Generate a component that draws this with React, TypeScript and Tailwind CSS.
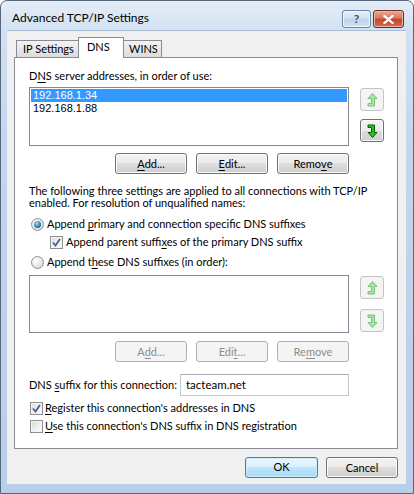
import React from "react";

const F = { fontFamily: "Lato, 'Noto Sans', sans-serif" };

function U({ children }: { children: React.ReactNode }) {
  return <span className="underline underline-offset-[2px] decoration-[1px]">{children}</span>;
}

function UpIcon({ enabled }: { enabled: boolean }) {
  return (
    <svg width="14" height="16" viewBox="0 0 14 16">
      <path
        d="M7.5 1.5 L12 6.5 L9.5 6.5 L9.5 14 L3 14 L3 11.5 L6.5 11.5 L6.5 6.5 L3 6.5 Z"
        fill={enabled ? "#22c322" : "#a6e3a6"}
        stroke={enabled ? "#0b5d0b" : "#73c673"}
        strokeWidth="1"
        strokeLinejoin="round"
      />
    </svg>
  );
}

function DownIcon({ enabled }: { enabled: boolean }) {
  return (
    <svg width="14" height="16" viewBox="0 0 14 16">
      <path
        d="M7.5 14.5 L12 9.5 L9.5 9.5 L9.5 2 L3 2 L3 4.5 L6.5 4.5 L6.5 9.5 L3 9.5 Z"
        fill={enabled ? "#22c322" : "#a6e3a6"}
        stroke={enabled ? "#0b5d0b" : "#73c673"}
        strokeWidth="1"
        strokeLinejoin="round"
      />
    </svg>
  );
}

function ArrowBtn({ dir, enabled }: { dir: "up" | "down"; enabled: boolean }) {
  return (
    <div
      className={
        "w-[24px] h-[23px] rounded-[3px] flex items-center justify-center border " +
        (enabled
          ? "border-[#707070] bg-[linear-gradient(180deg,#f2f2f2_0%,#ebebeb_50%,#dddddd_50%,#cfcfcf_100%)] shadow-[inset_0_0_0_1px_#fafafa]"
          : "border-[#c2c6c9] bg-[#f4f4f4]")
      }
    >
      {dir === "up" ? <UpIcon enabled={enabled} /> : <DownIcon enabled={enabled} />}
    </div>
  );
}

function Btn({ children, disabled, w = 72 }: { children: React.ReactNode; disabled?: boolean; w?: number }) {
  return (
    <div
      style={{ width: w }}
      className={
        "h-[21px] rounded-[3px] border flex items-center justify-center text-[11px] leading-[14px] " +
        (disabled
          ? "border-[#adb2b5] bg-[#f4f4f4] text-[#8d8d8d]"
          : "border-[#707070] text-black bg-[linear-gradient(180deg,#f2f2f2_0%,#ebebeb_50%,#dddddd_50%,#cfcfcf_100%)] shadow-[inset_0_0_0_1px_#fcfcfc]")
      }
    >
      {children}
    </div>
  );
}

function Radio({ checked }: { checked: boolean }) {
  return (
    <div className="w-[13px] h-[13px] rounded-full border border-[#8e8f8f] bg-[radial-gradient(circle_at_35%_35%,#ffffff_0%,#e4e4e4_60%,#cfcfcf_100%)] flex items-center justify-center shrink-0">
      {checked && (
        <div className="w-[7px] h-[7px] rounded-full bg-[radial-gradient(circle_at_40%_35%,#a9e1f9_0%,#2e7fb9_55%,#0c3c6b_100%)]" />
      )}
    </div>
  );
}

function Check({ checked }: { checked: boolean }) {
  return (
    <div className="w-[13px] h-[13px] border border-[#8e8f8f] bg-[linear-gradient(135deg,#dcdcdc_0%,#f5f5f5_70%,#ffffff_100%)] shadow-[inset_0_0_0_1px_#f4f4f4] flex items-center justify-center shrink-0">
      {checked && (
        <svg width="9" height="9" viewBox="0 0 9 9">
          <path d="M1 4.5 L3.5 7.5 L8 1" fill="none" stroke="#4a5f97" strokeWidth="1.8" />
        </svg>
      )}
    </div>
  );
}

export default function App() {
  return (
    <div
      style={F}
      className="w-[414px] h-[494px] relative rounded-t-[7px] border border-[#55687e] bg-[linear-gradient(180deg,#e4edf7_0%,#d2e1f1_6%,#c2d6ec_30%,#b9cfe9_100%)] text-black overflow-hidden"
    >
      {/* title bar */}
      <div className="h-[29px] flex items-start">
        <div className="pl-[11px] pt-[10px] text-[12px] leading-[14px] text-black flex-1">
          Advanced TCP/IP Settings
        </div>
        <div className="flex pt-[9px] pr-[9px] gap-[2px]">
          <div className="w-[29px] h-[18px] rounded-[3px] border border-[#6d84a4] bg-[linear-gradient(180deg,#e8f0f9_0%,#d3e1f1_45%,#bfd2ea_50%,#cfe0f3_100%)] shadow-[inset_0_0_0_1px_#f2f7fc] flex items-center justify-center text-[12px] font-bold text-[#3b4f6e]">
            ?
          </div>
          <div className="w-[31px] h-[18px] rounded-[3px] border border-[#6b2b21] bg-[linear-gradient(180deg,#e9a996_0%,#d9785f_45%,#c4442a_50%,#d56d52_100%)] shadow-[inset_0_0_0_1px_#eab7a8] flex items-center justify-center">
            <svg width="11" height="9" viewBox="0 0 11 9">
              <path d="M1.5 1 L9.5 8 M9.5 1 L1.5 8" stroke="#ffffff" strokeWidth="2.2" strokeLinecap="square" />
            </svg>
          </div>
        </div>
      </div>

      {/* client */}
      <div className="ml-[6px] w-[399px] h-[454px] bg-[#f0f0f0] border-t border-[#a8bcd4] flex flex-col">
        {/* tabs */}
        <div className="h-[20px] mt-[6px] flex items-end pl-[9px] text-[11px] leading-[14px]">
          <div className="w-[63px] h-[17px] border border-b-0 border-[#898c95] bg-[linear-gradient(180deg,#f2f2f2_0%,#e8e8e8_50%,#dcdcdc_100%)] pl-[6px] pt-[1px]">
            IP Settings
          </div>
          <div className="relative z-10 w-[46px] h-[21px] -mb-[1px] -ml-[1px] border border-b-0 border-[#898c95] bg-white pl-[8px] pt-[2px]">
            DNS
          </div>
          <div className="w-[39px] h-[17px] -ml-[1px] border border-b-0 border-[#898c95] bg-[linear-gradient(180deg,#f2f2f2_0%,#e8e8e8_50%,#dcdcdc_100%)] pl-[5px] pt-[1px]">
            WINS
          </div>
        </div>

        {/* panel */}
        <div className="ml-[7px] w-[384px] h-[392px] border border-[#898c95] bg-white pl-[14px] flex flex-col text-[11px] leading-[14px]">
          <div className="mt-[11px]">
            D<U>N</U>S server addresses, in order of use:
          </div>
          <div className="mt-[4px] flex">
            <div
              className="w-[320px] h-[59px] border border-[#828790] bg-white p-[1px] text-[11px] leading-[13px]"
              style={{ fontFamily: "'Liberation Sans', Arial, sans-serif" }}
            >
              <div className="h-[13px] bg-[#3399ff] text-white pl-[2px]">192.168.1.34</div>
              <div className="h-[13px] pl-[2px]">192.168.1.88</div>
            </div>
            <div className="ml-[11px] mt-[1px] flex flex-col gap-[8px]">
              <ArrowBtn dir="up" enabled={false} />
              <ArrowBtn dir="down" enabled={true} />
            </div>
          </div>
          <div className="mt-[7px] w-[320px] flex justify-end gap-[9px]">
            <Btn>
              <U>A</U>dd...
            </Btn>
            <Btn>
              <U>E</U>dit...
            </Btn>
            <Btn>
              Remo<U>v</U>e
            </Btn>
          </div>

          <div className="mt-[11px] leading-[12px]">
            The following three settings are applied to all connections with TCP/IP
            <br />
            enabled. For resolution of unqualified names:
          </div>

          <div className="mt-[8px] h-[14px] flex items-center pl-[2px] gap-[3px]">
            <Radio checked={true} />
            <span>
              Append <U>p</U>rimary and connection specific DNS suffixes
            </span>
          </div>
          <div className="mt-[4px] h-[14px] flex items-center pl-[21px] gap-[3px]">
            <Check checked={true} />
            <span>
              Append parent suffi<U>x</U>es of the primary DNS suffix
            </span>
          </div>
          <div className="mt-[6px] h-[14px] flex items-center pl-[2px] gap-[3px]">
            <Radio checked={false} />
            <span>
              Append t<U>h</U>ese DNS suffixes (in order):
            </span>
          </div>

          <div className="mt-[6px] flex">
            <div className="w-[320px] h-[58px] border border-[#828790] bg-white" />
            <div className="ml-[11px] mt-[1px] flex flex-col gap-[10px]">
              <ArrowBtn dir="up" enabled={false} />
              <ArrowBtn dir="down" enabled={false} />
            </div>
          </div>
          <div className="mt-[8px] w-[320px] flex justify-end gap-[9px]">
            <Btn disabled>
              A<U>d</U>d...
            </Btn>
            <Btn disabled>
              Edi<U>t</U>...
            </Btn>
            <Btn disabled>
              Re<U>m</U>ove
            </Btn>
          </div>

          <div className="mt-[12px] flex items-center h-[22px]">
            <div className="w-[151px] whitespace-nowrap">
              DNS <U>s</U>uffix for this connection:
            </div>
            <div className="w-[169px] h-[22px] border border-[#c4c7cc] border-t-[#abadb3] bg-white pl-[5px] flex items-center text-[11.5px]">
              tacteam.net
            </div>
          </div>

          <div className="mt-[5px] h-[14px] flex items-center pl-[1px] gap-[2px]">
            <Check checked={true} />
            <span>
              <U>R</U>egister this connection's addresses in DNS
            </span>
          </div>
          <div className="mt-[4px] h-[14px] flex items-center pl-[1px] gap-[2px]">
            <Check checked={false} />
            <span>
              <U>U</U>se this connection's DNS suffix in DNS registration
            </span>
          </div>
        </div>

        {/* bottom buttons */}
        <div className="mt-[8px] w-[391px] flex justify-end gap-[8px] text-[11px]">
          <div className="w-[73px] h-[21px] rounded-[3px] border border-[#3c7fb1] bg-[linear-gradient(180deg,#eaf6fd_0%,#d9f0fc_50%,#bee6fd_50%,#a7d9f5_100%)] shadow-[inset_0_0_0_1px_#cdeefc] flex items-center justify-center">
            OK
          </div>
          <Btn w={72}>Cancel</Btn>
        </div>
      </div>
    </div>
  );
}
